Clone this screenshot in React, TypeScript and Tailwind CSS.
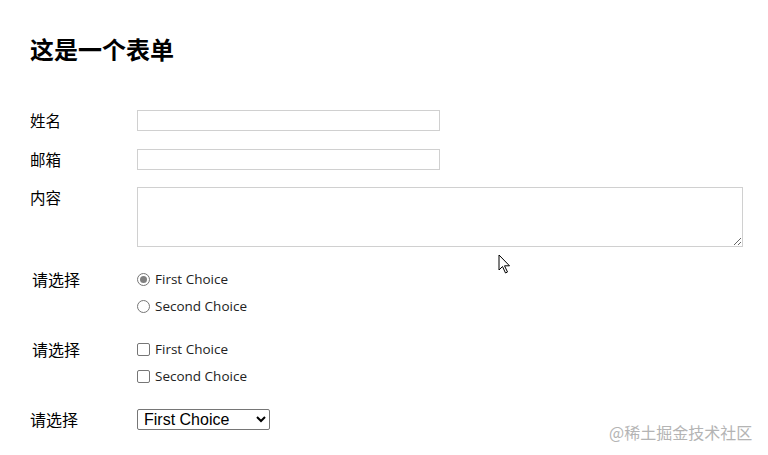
import React from "react";

const cjk = { fontFamily: '"Noto Sans CJK SC", "Noto Sans", sans-serif' };
const latin = { fontFamily: '"Open Sans", "Noto Sans", "Noto Sans CJK SC", sans-serif' };

function Radio({ checked, label }: { checked?: boolean; label: string }) {
  return (
    <label className="flex items-center h-[27px]">
      <span className="relative flex w-[13px] h-[13px] items-center justify-center">
        <input
          type="radio"
          name="r"
          defaultChecked={checked}
          className="appearance-none m-0 w-[13px] h-[13px] rounded-full border border-[#767676] bg-white"
        />
        {checked && (
          <span className="absolute w-[7px] h-[7px] rounded-full bg-[#808080]" />
        )}
      </span>
      <span className="ml-[5px] text-[13.5px] text-[#222]" style={latin}>
        {label}
      </span>
    </label>
  );
}

function Check({ label }: { label: string }) {
  return (
    <label className="flex items-center h-[27px]">
      <input
        type="checkbox"
        className="appearance-none m-0 w-[13px] h-[13px] rounded-[2px] border border-[#767676] bg-white"
      />
      <span className="ml-[5px] text-[13.5px] text-[#222]" style={latin}>
        {label}
      </span>
    </label>
  );
}

export default function App() {
  return (
    <div className="relative w-[768px] h-[455px] bg-white overflow-hidden text-black">
      <div className="pt-[36px] pl-[30px]">
        <h1 className="h-[26px] leading-[26px] text-[24px] font-bold" style={cjk}>
          这是一个表单
        </h1>

        <div className="mt-[48px] flex items-center h-[21px]">
          <span className="w-[107px] text-[15.5px] leading-[21px]" style={cjk}>姓名</span>
          <input type="text" className="w-[303px] h-[21px] border border-[#d0d0d0] bg-white outline-none" />
        </div>

        <div className="mt-[18px] flex items-center h-[21px]">
          <span className="w-[107px] text-[15.5px] leading-[21px]" style={cjk}>邮箱</span>
          <input type="text" className="w-[303px] h-[21px] border border-[#d0d0d0] bg-white outline-none" />
        </div>

        <div className="mt-[17px] flex items-start">
          <span className="w-[107px] text-[15.5px] leading-[21px]" style={cjk}>内容</span>
          <textarea className="w-[606px] h-[60px] border border-[#d0d0d0] bg-white outline-none resize-y" />
        </div>

        <div className="mt-[19px] flex items-start">
          <span className="w-[107px] pl-[2px] text-[16px] leading-[27px]" style={cjk}>请选择</span>
          <div className="flex flex-col">
            <Radio checked label="First Choice" />
            <Radio label="Second Choice" />
          </div>
        </div>

        <div className="mt-[16px] flex items-start">
          <span className="w-[107px] pl-[2px] text-[16px] leading-[27px]" style={cjk}>请选择</span>
          <div className="flex flex-col">
            <Check label="First Choice" />
            <Check label="Second Choice" />
          </div>
        </div>

        <div className="mt-[19px] flex items-center h-[21px]">
          <span className="w-[107px] text-[16px] leading-[21px]" style={cjk}>请选择</span>
          <select
            className="w-[133px] h-[21px] border border-[#767676] rounded-[2px] bg-white text-[16px] leading-[19px] pl-[2px] outline-none"
            style={{ fontFamily: '"Liberation Sans", Arial, sans-serif' }}
            defaultValue="1"
          >
            <option value="1">First Choice</option>
            <option value="2">Second Choice</option>
          </select>
        </div>
      </div>

      <div
        className="absolute left-[609px] top-[421px] text-[16px] text-[#b4b4b4] leading-[22px]"
        style={cjk}
      >
        @稀土掘金技术社区
      </div>

      <svg className="absolute left-[498px] top-[254px]" width="14" height="21" viewBox="0 0 14 21">
        <path
          d="M1 1 L1 16 L4.5 12.5 L7.5 19 L9.5 18 L6.5 11.8 L11.5 11.8 Z"
          fill="white"
          stroke="black"
          strokeWidth="1"
          strokeLinejoin="round"
        />
      </svg>
    </div>
  );
}
